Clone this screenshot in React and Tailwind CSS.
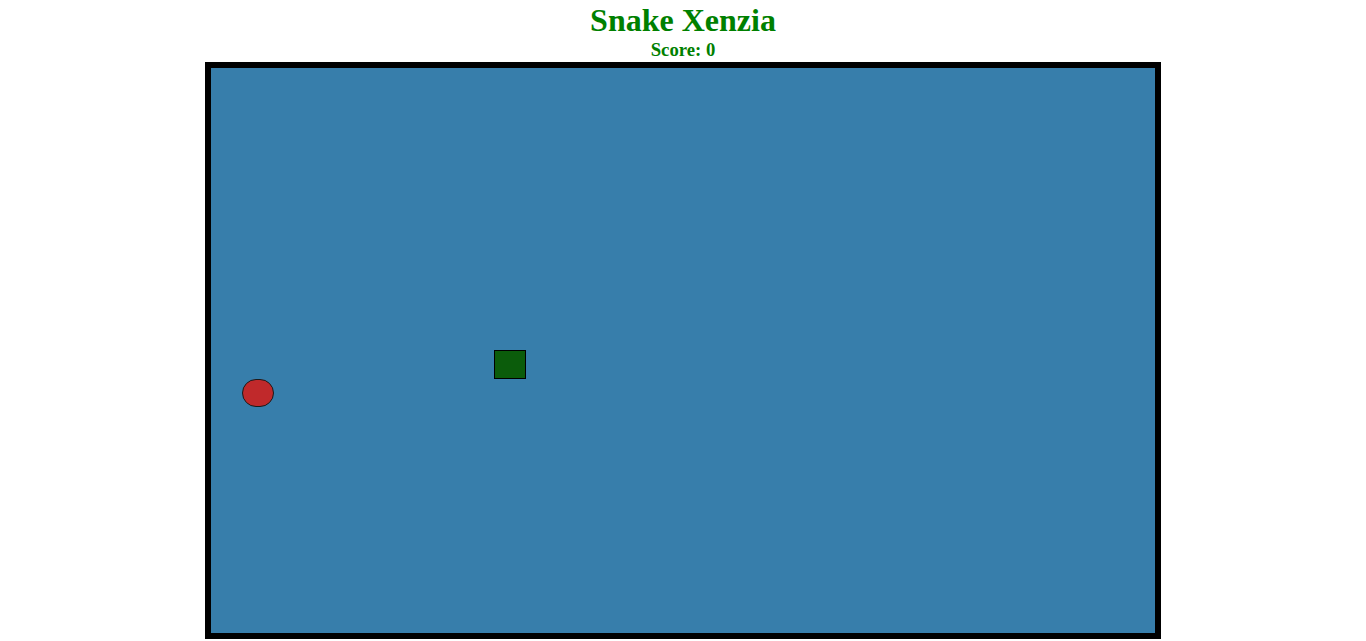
import React from 'react';

const App = () => {
    const snake = [{ x: 283, y: 282 }];
    const food = { x: 31, y: 311 };

    return (
        <div className="min-h-[641px] bg-white font-['Liberation_Serif','Times_New_Roman',serif] text-center">
            {/* Header */}
            <h1 className="pt-[2px] text-[32px] leading-[36px] font-bold text-[#008000]">Snake Xenzia</h1>
            <h3 className="mt-[1px] text-[18.72px] leading-[21px] font-bold text-[#008000]">Score: 0</h3>

            {/* Board */}
            <div className="mx-auto mt-[2px] w-[956px] h-[577px] border-[6px] border-black bg-[#377eab] relative">
                {snake.map((s, i) => (
                    <div
                        key={i}
                        className="absolute w-[32px] h-[29px] bg-[#0b5c0b] border border-black"
                        style={{ left: s.x, top: s.y }}
                    />
                ))}
                <div
                    className="absolute w-[32px] h-[28px] rounded-full bg-[#c0292b] border border-[#1a1a1a]"
                    style={{ left: food.x, top: food.y }}
                />
            </div>
        </div>
    );
};

export default App;
